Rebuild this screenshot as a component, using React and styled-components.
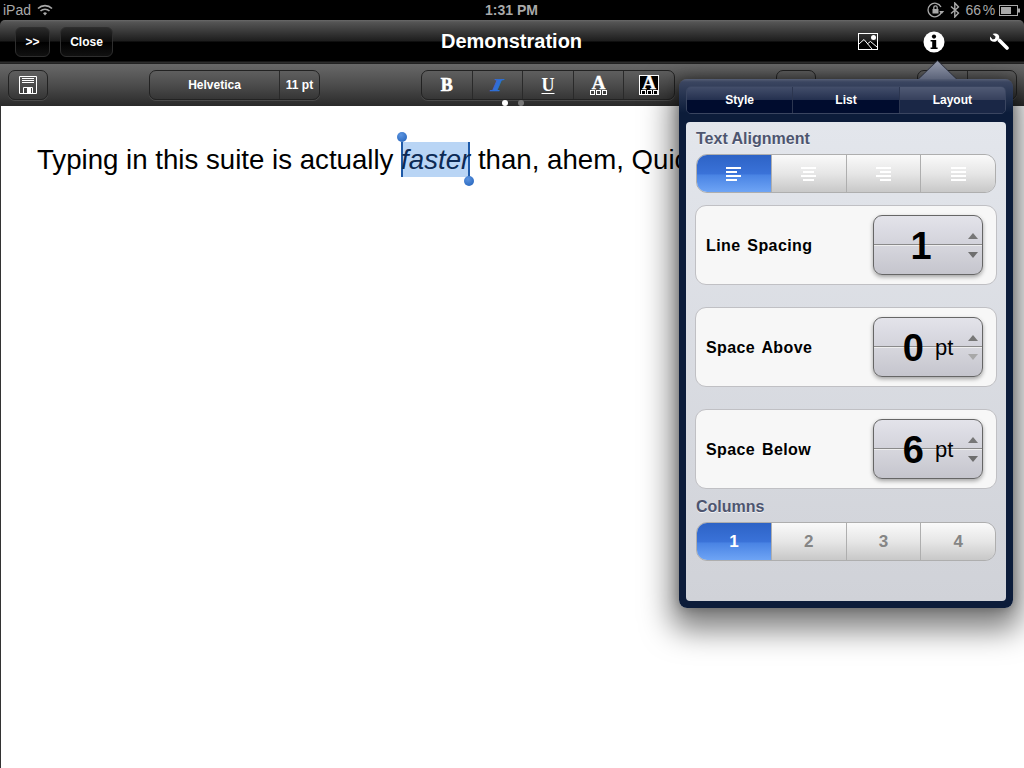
import React from "react";
import styled, { createGlobalStyle } from "styled-components";

const Global = createGlobalStyle`
  html, body { margin: 0; padding: 0; background: #000; }
  body { font-family: "Liberation Sans", Arial, sans-serif; }
  * { box-sizing: border-box; }
`;

const Screen = styled.div`
  position: relative;
  width: 1024px;
  height: 768px;
  overflow: hidden;
  display: flex;
  flex-direction: column;
  background: #000;
`;

const StatusBar = styled.div`
  height: 20px;
  display: grid;
  grid-template-columns: 1fr auto 1fr;
  align-items: center;
  padding: 0 4px 0 3px;
  color: #a9a9a9;
  font-size: 14px;
  font-weight: 400;
`;
const StatusLeft = styled.div`
  display: flex;
  align-items: center;
  gap: 6px;
`;
const StatusTime = styled.div`
  font-weight: 700;
  font-size: 14px;
`;
const StatusRight = styled.div`
  display: flex;
  align-items: center;
  justify-content: flex-end;
  gap: 5px;
`;
const Percent = styled.span`
  word-spacing: -2px;
  letter-spacing: -0.1px;
  margin-right: -1px;
`;

const NavBar = styled.div`
  height: 43px;
  border-radius: 5px 5px 0 0;
  background: linear-gradient(#6a6a6a 0, #555 2px, #1d1d1d 21px, #000 22px, #000 41px, #2c2c2c 42px);
  display: grid;
  grid-template-columns: 1fr auto 1fr;
  align-items: center;
  padding: 0 15px;
`;
const NavLeft = styled.div`
  display: flex;
  gap: 10px;
`;
const NavTitle = styled.div`
  color: #fff;
  font-size: 20px;
  font-weight: 700;
  margin-left: -1px;
`;
const NavRight = styled.div`
  display: flex;
  justify-content: flex-end;
  align-items: center;
  gap: 45px;
`;
const NavButton = styled.div`
  width: ${(p) => p.$w}px;
  height: 30px;
  border: 1px solid #2e2e2e;
  border-radius: 6px;
  background: linear-gradient(#2a2a2a, #0a0a0a 50%, #000 51%, #111);
  color: #fff;
  font-size: 12px;
  font-weight: 700;
  display: flex;
  align-items: center;
  justify-content: center;
`;

const ToolBar = styled.div`
  position: relative;
  height: 43px;
  padding: 6px 7px 7px 8px;
  background: linear-gradient(#686868, #4c4c4c 50%, #2a2a2a);
  border-top: 1px solid #222;
  display: flex;
  gap: 101px;
  align-items: flex-start;
`;
const Group = styled.div`
  width: ${(p) => p.$w}px;
  height: 30px;
  flex: none;
  border: 1px solid #222;
  border-radius: 7px;
  box-shadow: 0 1px 0 rgba(255, 255, 255, 0.12);
  display: flex;
  align-items: center;
  justify-content: center;
`;
const Cell = styled.div`
  flex: ${(p) => p.$w ? `0 0 ${p.$w}px` : 1};
  height: 100%;
  color: ${(p) => p.$color || "#fff"};
  font-size: 12px;
  font-weight: 700;
  display: flex;
  align-items: center;
  justify-content: center;
  & + & { border-left: 1px solid #2a2a2a; }
`;
const SerifGlyph = styled.span`
  font-family: "Liberation Serif", "DejaVu Serif", serif;
  font-weight: 700;
  font-size: 18px;
  line-height: 1;
  -webkit-text-stroke: ${(p) => p.$under ? 0 : 0.6}px currentColor;
  ${(p) => p.$italic && "transform: skewX(-24deg) scaleX(1.5);"}
  text-decoration: ${(p) => p.$under ? "underline" : "none"};
  text-underline-offset: 2px;
`;
const LetterIcon = styled.div`
  display: flex;
  flex-direction: column;
  align-items: center;
  width: 20px;
  height: 20px;
  padding-top: 1px;
  background: ${(p) => p.$inverse ? "#000" : "transparent"};
  outline: ${(p) => p.$inverse ? "1px solid #fff" : "none"};
  outline-offset: -1px;
`;
const LetterA = styled.span`
  font-family: "Liberation Serif", serif;
  font-weight: 700;
  font-size: 19px;
  line-height: 13px;
  height: 13px;
  color: #fff;
  -webkit-text-stroke: 0.3px #fff;
`;
const Dots = styled.div`
  position: absolute;
  left: 502px;
  bottom: 0;
  display: flex;
  gap: 10px;
`;
const Dot = styled.span`
  width: 6px;
  height: 6px;
  border-radius: 50%;
  background: ${(p) => p.$on ? "#fff" : "#777"};
`;

const Doc = styled.div`
  flex: 1;
  background: #fff;
  border-left: 1px solid #333;
  padding: 36px 0 0 36px;
  color: #000;
  font-size: 27.65px;
  line-height: 34px;
  white-space: nowrap;
`;
const Selected = styled.span`
  position: relative;
  display: inline-block;
  font-style: italic;
  background: #b9d5f5;
  color: #0c2a55;
  box-shadow: inset 2px 0 0 #1f5aa8, inset -2px 0 0 #1f5aa8;
  line-height: 35px;
`;
const Handle = styled.span`
  position: absolute;
  width: 10px;
  height: 10px;
  border-radius: 50%;
  background: radial-gradient(circle at 40% 30%, #5c94e0, #1f5fb8);
  ${(p) => p.$start ? "left: -4px; top: -10px;" : "right: -4px; bottom: -9px;"}
`;

const Popover = styled.div`
  position: absolute;
  left: 679px;
  top: 79px;
  width: 334px;
  height: 529px;
  padding: 7px;
  border-radius: 8px;
  background: linear-gradient(#565e74 0, #3a4560 3px, #0c1c3a 34px, #0c1c3a);
  box-shadow: 0 14px 30px 8px rgba(0, 0, 0, 0.5), 0 0 12px rgba(0, 0, 0, 0.3);
  display: flex;
  flex-direction: column;
  gap: 8px;
`;
const Arrow = styled.div`
  position: absolute;
  left: 239px;
  top: -19px;
  width: 39px;
  height: 19px;
  background: #2a2e3a;
  clip-path: polygon(50% 0, 100% 100%, 0 100%);
  &::after {
    content: "";
    position: absolute;
    inset: 1px 1px 0;
    background: linear-gradient(#959bac, #5c647a);
    clip-path: polygon(50% 0, 100% 100%, 0 100%);
  }
`;
const Tabs = styled.div`
  height: 28px;
  display: flex;
  border: 1px solid #3a4560;
  border-radius: 5px;
  overflow: hidden;
  flex: none;
`;
const Tab = styled.div`
  flex: 1;
  color: #fff;
  font-size: 12px;
  font-weight: 700;
  display: flex;
  align-items: center;
  justify-content: center;
  background: ${(p) => p.$on
    ? "linear-gradient(#505a74, #36405c 50%, #1a2746 51%, #1a2746)"
    : "linear-gradient(#434e6a, #24304f 50%, #000c2e 51%, #000c2e)"};
  & + & { border-left: 1px solid #2c3650; }
`;
const Panel = styled.div`
  flex: 1;
  padding: 7px 10px 6px;
  border-radius: 4px;
  background: linear-gradient(#e3e6ec, #d0d2d8);
  display: flex;
  flex-direction: column;
`;
const Label = styled.div`
  height: 20px;
  margin-top: ${(p) => p.$mt || 0}px;
  line-height: 20px;
  color: #4d556f;
  font-size: 16px;
  font-weight: 700;
  text-shadow: 0 1px 0 rgba(255, 255, 255, 0.7);
`;
const Segments = styled.div`
  display: flex;
  height: 39px;
  margin-top: 5px;
  border: 1px solid #aeaeae;
  border-radius: 11px;
  overflow: hidden;
  flex: none;
`;
const Segment = styled.div`
  flex: 1;
  display: flex;
  align-items: center;
  justify-content: center;
  color: ${(p) => p.$on ? "#fff" : "#858585"};
  font-size: 17px;
  font-weight: 700;
  background: ${(p) => p.$on
    ? "linear-gradient(#2d63c6, #3a72d8 50%, #4a84e4 55%, #6ea4f5)"
    : "linear-gradient(#fafafa, #e6e6e6 50%, #c8c8c8)"};
  & + & { border-left: 1px solid #aeaeae; }
`;
const Card = styled.div`
  height: 80px;
  margin: ${(p) => p.$mt}px -1px 0;
  padding: 0 13px 0 10px;
  flex: none;
  background: #f7f7f7;
  border: 1px solid #c0c0c4;
  border-radius: 11px;
  display: flex;
  align-items: center;
  justify-content: space-between;
`;
const CardLabel = styled.div`
  color: #000;
  font-size: 16px;
  font-weight: 700;
  word-spacing: 2px;
  letter-spacing: 0.4px;
  padding-top: 2px;
`;
const Stepper = styled.div`
  position: relative;
  width: 110px;
  height: 60px;
  border: 1px solid #666;
  border-radius: 9px;
  background: linear-gradient(#e3e3ea, #d3d3db 28px, #8a8a8a 28px, #8a8a8a 29px, #eee 29px, #eee 30px, #d6d6dd 30px, #c5c5cd);
  box-shadow: 0 2px 4px rgba(0, 0, 0, 0.35);
  display: flex;
  align-items: center;
  justify-content: center;
  gap: 11px;
  padding: 1px ${(p) => p.$shift || 0}px 0 0;
`;
const Value = styled.span`
  color: #000;
  font-size: 38px;
  font-weight: 700;
  line-height: 1;
`;
const Unit = styled.span`
  color: #000;
  font-size: 22px;
  line-height: 1;
`;
const Arrows = styled.div`
  position: absolute;
  right: 4px;
  top: 17px;
  display: flex;
  flex-direction: column;
  gap: 13px;
`;
const Tri = styled.span`
  width: 0;
  height: 0;
  border-left: 5px solid transparent;
  border-right: 5px solid transparent;
  ${(p) => p.$down
    ? `border-top: 6px solid ${p.$dim ? "#a8a8a8" : "#6e6e6e"};`
    : `border-bottom: 6px solid ${p.$dim ? "#a8a8a8" : "#777"};`}
`;

const Wifi = () => (
  <svg width="16" height="12" viewBox="0 0 16 12" fill="none" stroke="#a9a9a9" strokeWidth="1.6">
    <path d="M1 4.5a10 10 0 0 1 14 0" />
    <path d="M3.5 7a6.5 6.5 0 0 1 9 0" />
    <path d="M8 11.5 6 9.2a3 3 0 0 1 4 0z" fill="#a9a9a9" stroke="none" />
  </svg>
);
const RotationLock = () => (
  <svg width="18" height="16" viewBox="0 0 18 16" fill="none" stroke="#a9a9a9" strokeWidth="1.3">
    <path d="M14.5 9.5A6.8 6.8 0 1 1 14 5" />
    <path d="M12.2 9h5l-2.5 3z" fill="#a9a9a9" stroke="none" />
    <rect x="5.5" y="7" width="6" height="4.5" fill="#a9a9a9" stroke="none" />
    <path d="M6.8 7V5.5a1.7 1.7 0 0 1 3.4 0V7" />
  </svg>
);
const Bluetooth = () => (
  <svg width="10" height="16" viewBox="0 0 10 16" fill="none" stroke="#a9a9a9" strokeWidth="1.4">
    <path d="M1 4.5 8.5 11 4.8 15V1l3.7 4L1 11.5" />
  </svg>
);
const Battery = () => (
  <svg width="21" height="11" viewBox="0 0 21 11">
    <rect x="0.5" y="0.5" width="18" height="10" fill="none" stroke="#a9a9a9" />
    <rect x="2" y="2" width="10" height="7" fill="#a9a9a9" />
    <rect x="19" y="3.5" width="2" height="4" fill="#a9a9a9" />
  </svg>
);
const PictureIcon = () => (
  <svg width="20" height="17" viewBox="0 0 20 17" fill="none" stroke="#fff">
    <rect x="0.5" y="0.5" width="19" height="16" />
    <path d="M1 11 6 6.5 14 16M9 11l3.5-2.5L19 14" />
    <circle cx="15.5" cy="4.5" r="2.5" fill="#fff" stroke="none" />
  </svg>
);
const InfoIcon = () => (
  <svg width="22" height="22" viewBox="0 0 22 22">
    <circle cx="11" cy="11" r="10.5" fill="#fff" />
    <circle cx="11" cy="5.6" r="2.1" fill="#000" />
    <path d="M7.6 9h5.6v7.4h1.4V18H7.6v-1.6h1.6v-5.8H7.6z" fill="#000" />
  </svg>
);
const WrenchIcon = () => (
  <svg width="19" height="18" viewBox="0 0 19 18">
    <path d="M9.5 7.5 17 15" stroke="#fff" strokeWidth="3.6" strokeLinecap="round" />
    <path d="M5.2.4C3.9.3 3 .6 2.6.9l3 2.6-.6 2.3-2.3.6L0 3.4c-.4 1.4-.1 3.2 1 4.3 1.3 1.2 3.3 1.4 4.9.8l3-2.8C9.6 4 9.2 2.4 8 1.4 7.2.8 6.2.5 5.2.4z" fill="#fff" />
  </svg>
);
const SaveIcon = () => (
  <svg width="18" height="18" viewBox="0 0 18 18" fill="none" stroke="#fff">
    <path d="M.5.5h17v17H.5z" />
    <path d="M3 2.5h12M3 4.5h12M3 6.5h12" />
    <path d="M4.5 17.5v-6h9v6" />
    <rect x="8" y="12" width="4" height="5" fill="#fff" stroke="none" />
  </svg>
);
const Squares = () => (
  <svg width="17" height="5" viewBox="0 0 17 5" fill="none" stroke="#fff" style={{ display: "block", marginTop: 1 }}>
    <rect x="0.5" y="0.5" width="4" height="4" />
    <rect x="6.5" y="0.5" width="4" height="4" />
    <rect x="12.5" y="0.5" width="4" height="4" />
  </svg>
);
const AlignIcon = ({ kind, color }) => {
  const short = kind === "justify" ? 15 : 11;
  const widths = [15, short, 15, short];
  return (
    <svg width="15" height="14" viewBox="0 0 15 14">
      {widths.map((w, i) => (
        <rect
          key={i}
          x={kind === "left" ? 0 : kind === "right" ? 15 - w : (15 - w) / 2}
          y={i * 4}
          width={w}
          height="2"
          fill={color}
        />
      ))}
    </svg>
  );
};

const rows = [
  { label: "Line Spacing", value: "1", shift: 14 },
  { label: "Space Above", value: "0", unit: "pt", mt: 22, dim: true },
  { label: "Space Below", value: "6", unit: "pt", mt: 22 },
];

export default function App() {
  return (
    <Screen>
      <Global />
      <StatusBar>
        <StatusLeft>iPad <Wifi /></StatusLeft>
        <StatusTime>1:31 PM</StatusTime>
        <StatusRight>
          <RotationLock />
          <Bluetooth />
          <Percent>66 %</Percent>
          <Battery />
        </StatusRight>
      </StatusBar>
      <NavBar>
        <NavLeft>
          <NavButton $w={35}>&gt;&gt;</NavButton>
          <NavButton $w={53}>Close</NavButton>
        </NavLeft>
        <NavTitle>Demonstration</NavTitle>
        <NavRight>
          <PictureIcon />
          <InfoIcon />
          <WrenchIcon />
        </NavRight>
      </NavBar>
      <ToolBar>
        <Group $w={40}><SaveIcon /></Group>
        <Group $w={171}>
          <Cell>Helvetica</Cell>
          <Cell $w={40}>11 pt</Cell>
        </Group>
        <Group $w={254}>
          <Cell><SerifGlyph>B</SerifGlyph></Cell>
          <Cell $color="#2f6fd6"><SerifGlyph $italic>I</SerifGlyph></Cell>
          <Cell><SerifGlyph $under>U</SerifGlyph></Cell>
          <Cell><LetterIcon><LetterA>A</LetterA><Squares /></LetterIcon></Cell>
          <Cell><LetterIcon $inverse><LetterA>A</LetterA><Squares /></LetterIcon></Cell>
        </Group>
        <Group $w={40} />
        <Group $w={100}><Cell /><Cell /></Group>
        <Dots><Dot $on /><Dot /></Dots>
      </ToolBar>
      <Doc>
        Typing in this suite is actually <Selected><Handle $start />faster<Handle /></Selected> than, ahem, Quic
      </Doc>
      <Popover>
        <Arrow />
        <Tabs>
          <Tab>Style</Tab>
          <Tab>List</Tab>
          <Tab $on>Layout</Tab>
        </Tabs>
        <Panel>
          <Label>Text Alignment</Label>
          <Segments>
            <Segment $on><AlignIcon kind="left" color="#fff" /></Segment>
            <Segment><AlignIcon kind="center" color="#fff" /></Segment>
            <Segment><AlignIcon kind="right" color="#fff" /></Segment>
            <Segment><AlignIcon kind="justify" color="#fff" /></Segment>
          </Segments>
          {rows.map((r) => (
            <Card key={r.label} $mt={r.mt || 12}>
              <CardLabel>{r.label}</CardLabel>
              <Stepper $shift={r.shift}>
                <Value>{r.value}</Value>
                {r.unit && <Unit>{r.unit}</Unit>}
                <Arrows>
                  <Tri />
                  <Tri $down $dim={r.dim} />
                </Arrows>
              </Stepper>
            </Card>
          ))}
          <Label $mt={8}>Columns</Label>
          <Segments>
            <Segment $on>1</Segment>
            <Segment>2</Segment>
            <Segment>3</Segment>
            <Segment>4</Segment>
          </Segments>
        </Panel>
      </Popover>
    </Screen>
  );
}
